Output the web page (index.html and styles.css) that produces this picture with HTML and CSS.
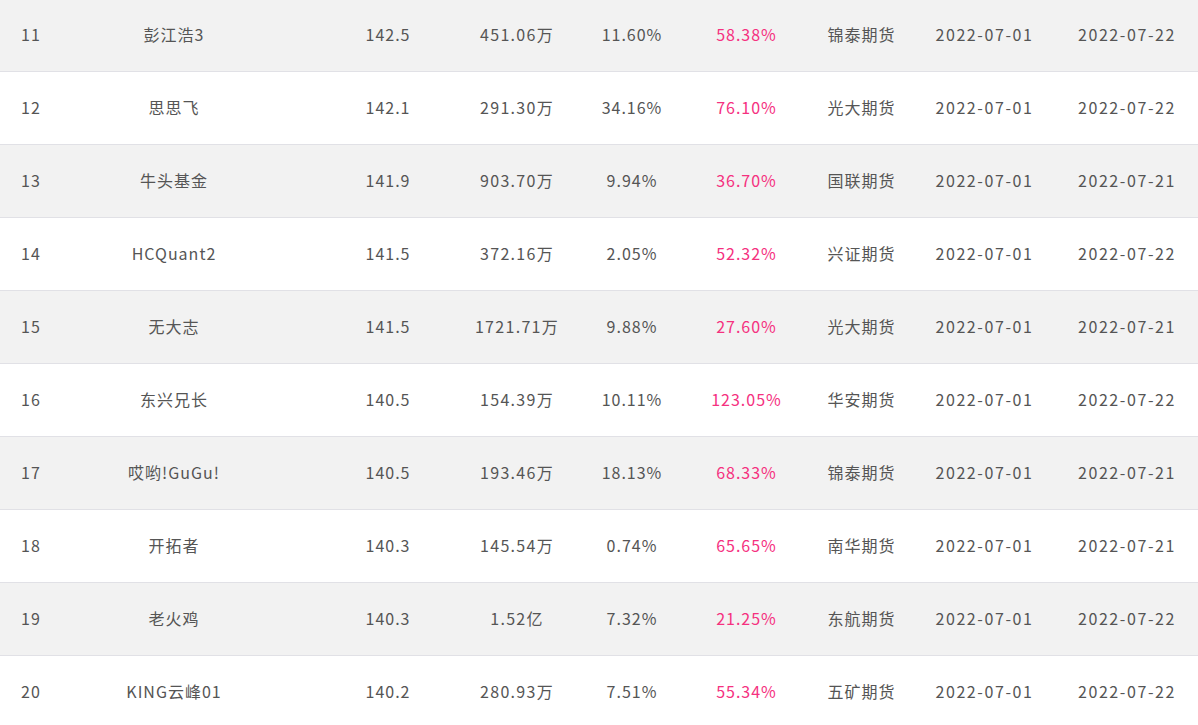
FILE: index.html
```html
<!DOCTYPE html>
<html lang="zh-CN">
<head>
<meta charset="utf-8">
<title>排行榜</title>
<link rel="stylesheet" href="styles.css">
</head>
<body>
<div class="table">
  <div class="row alt"><span class="c1">11</span><span class="c2">彭江浩3</span><span class="c3">142.5</span><span class="c4">451.06万</span><span class="c5">11.60%</span><span class="c6">58.38%</span><span class="c7">锦泰期货</span><span class="c8">2022-07-01</span><span class="c9">2022-07-22</span></div>
  <div class="row"><span class="c1">12</span><span class="c2">思思飞</span><span class="c3">142.1</span><span class="c4">291.30万</span><span class="c5">34.16%</span><span class="c6">76.10%</span><span class="c7">光大期货</span><span class="c8">2022-07-01</span><span class="c9">2022-07-22</span></div>
  <div class="row alt"><span class="c1">13</span><span class="c2">牛头基金</span><span class="c3">141.9</span><span class="c4">903.70万</span><span class="c5">9.94%</span><span class="c6">36.70%</span><span class="c7">国联期货</span><span class="c8">2022-07-01</span><span class="c9">2022-07-21</span></div>
  <div class="row"><span class="c1">14</span><span class="c2">HCQuant2</span><span class="c3">141.5</span><span class="c4">372.16万</span><span class="c5">2.05%</span><span class="c6">52.32%</span><span class="c7">兴证期货</span><span class="c8">2022-07-01</span><span class="c9">2022-07-22</span></div>
  <div class="row alt"><span class="c1">15</span><span class="c2">无大志</span><span class="c3">141.5</span><span class="c4">1721.71万</span><span class="c5">9.88%</span><span class="c6">27.60%</span><span class="c7">光大期货</span><span class="c8">2022-07-01</span><span class="c9">2022-07-21</span></div>
  <div class="row"><span class="c1">16</span><span class="c2">东兴兄长</span><span class="c3">140.5</span><span class="c4">154.39万</span><span class="c5">10.11%</span><span class="c6">123.05%</span><span class="c7">华安期货</span><span class="c8">2022-07-01</span><span class="c9">2022-07-22</span></div>
  <div class="row alt"><span class="c1">17</span><span class="c2">哎哟!GuGu!</span><span class="c3">140.5</span><span class="c4">193.46万</span><span class="c5">18.13%</span><span class="c6">68.33%</span><span class="c7">锦泰期货</span><span class="c8">2022-07-01</span><span class="c9">2022-07-21</span></div>
  <div class="row"><span class="c1">18</span><span class="c2">开拓者</span><span class="c3">140.3</span><span class="c4">145.54万</span><span class="c5">0.74%</span><span class="c6">65.65%</span><span class="c7">南华期货</span><span class="c8">2022-07-01</span><span class="c9">2022-07-21</span></div>
  <div class="row alt"><span class="c1">19</span><span class="c2">老火鸡</span><span class="c3">140.3</span><span class="c4">1.52亿</span><span class="c5">7.32%</span><span class="c6">21.25%</span><span class="c7">东航期货</span><span class="c8">2022-07-01</span><span class="c9">2022-07-22</span></div>
  <div class="row"><span class="c1">20</span><span class="c2">KING云峰01</span><span class="c3">140.2</span><span class="c4">280.93万</span><span class="c5">7.51%</span><span class="c6">55.34%</span><span class="c7">五矿期货</span><span class="c8">2022-07-01</span><span class="c9">2022-07-22</span></div>
</div>
</body>
</html>
```
FILE: styles.css
```css
html, body {
  margin: 0;
  padding: 0;
  background: #ffffff;
  overflow: hidden;
}
.table {
  margin-top: -1px;
  width: 1198px;
  font-family: "Noto Sans CJK SC", "Noto Sans", sans-serif;
  font-size: 16px;
  letter-spacing: 1px;
  color: #555555;
}
.row {
  display: grid;
  grid-template-columns: 102px 179px 171px 122px 115px 114px 120px 133px 142px;
  height: 70px;
  padding-bottom: 2px;
  align-items: center;
  border-bottom: 1px solid #e1e1e6;
  background: #ffffff;
  white-space: nowrap;
}
.row.alt {
  background: #f2f2f2;
}
.row span {
  text-align: center;
}
.c1 { padding-right: 40px; }
.c2 { padding-right: 35px; }
.c3 { padding-left: 43px; }
.c4 { padding-left: 8px; letter-spacing: 1.3px; }
.c5 { padding-left: 1px; }
.c6 { padding-left: 1px; color: #f5317f; }
.c7 { padding-right: 3px; }
.c8 { padding-right: 10px; letter-spacing: 1.6px; }
.c9 { letter-spacing: 1.6px; }
```
